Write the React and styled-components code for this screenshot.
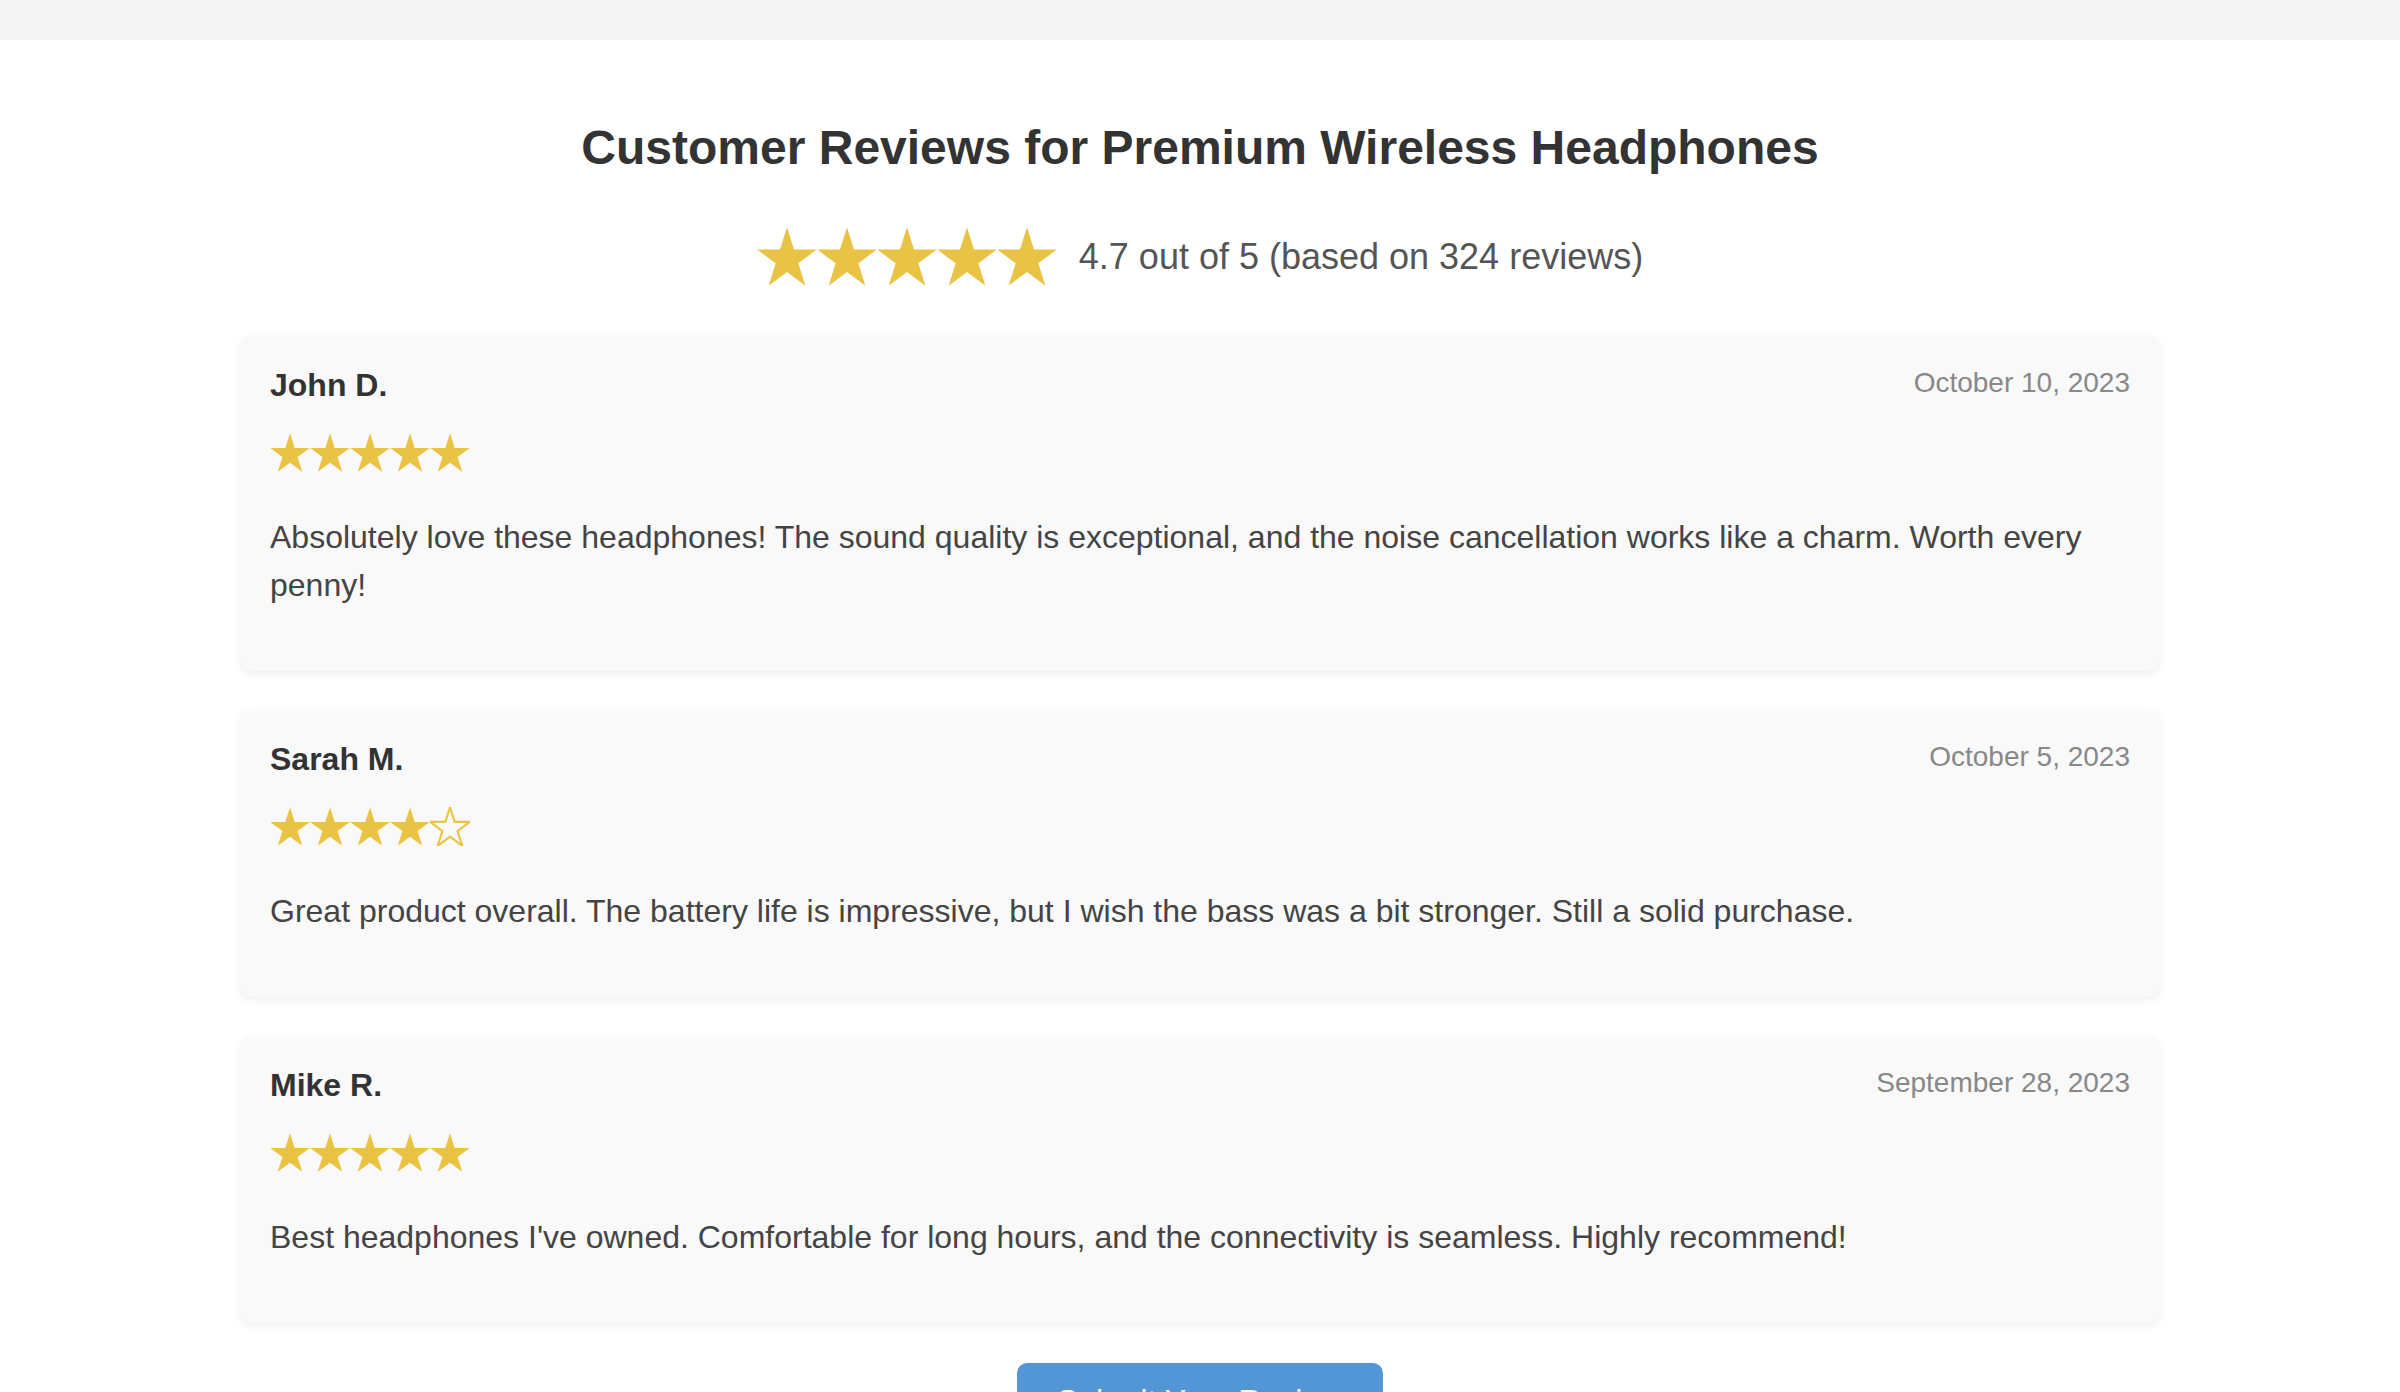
import React from "react";
import styled, { createGlobalStyle } from "styled-components";

const reviews = [
  {
    name: "John D.",
    date: "October 10, 2023",
    rating: 5,
    text: "Absolutely love these headphones! The sound quality is exceptional, and the noise cancellation works like a charm. Worth every penny!",
  },
  {
    name: "Sarah M.",
    date: "October 5, 2023",
    rating: 4,
    text: "Great product overall. The battery life is impressive, but I wish the bass was a bit stronger. Still a solid purchase.",
  },
  {
    name: "Mike R.",
    date: "September 28, 2023",
    rating: 5,
    text: "Best headphones I've owned. Comfortable for long hours, and the connectivity is seamless. Highly recommend!",
  },
];

const STAR_POINTS =
  "0,-50 11.23,-15.45 47.55,-15.45 18.16,5.9 29.39,40.45 0,19.1 -29.39,40.45 -18.16,5.9 -47.55,-15.45 -11.23,-15.45";

const Star = ({ filled, width, height }) => (
  <svg
    width={width}
    height={height}
    viewBox="-48 -50.5 96 91.5"
    preserveAspectRatio="none"
  >
    <polygon
      points={STAR_POINTS}
      fill={filled ? "#e9c444" : "none"}
      stroke="#e9c444"
      strokeWidth={filled ? 0 : 5}
      strokeLinejoin="miter"
    />
  </svg>
);

const Stars = ({ rating, big }) => (
  <StarRow big={big}>
    {[1, 2, 3, 4, 5].map((n) => (
      <Star
        key={n}
        filled={n <= rating}
        width={big ? 60 : 40}
        height={big ? 59 : 39}
      />
    ))}
  </StarRow>
);

const App = () => {
  return (
    <>
      <GlobalStyle />
      <TopBar />
      <Main>
        <Title>Customer Reviews for Premium Wireless Headphones</Title>
        <Summary>
          <Stars rating={5} big />
          <SummaryText>4.7 out of 5 (based on 324 reviews)</SummaryText>
        </Summary>
        <ReviewList>
          {reviews.map((r) => (
            <Card key={r.name}>
              <CardHeader>
                <Name>{r.name}</Name>
                <Date>{r.date}</Date>
              </CardHeader>
              <Stars rating={r.rating} />
              <ReviewText>{r.text}</ReviewText>
            </Card>
          ))}
        </ReviewList>
        <ButtonRow>
          <SubmitButton>Submit Your Review</SubmitButton>
        </ButtonRow>
      </Main>
    </>
  );
};

export default App;

const GlobalStyle = createGlobalStyle`
  body {
    margin: 0;
    background: #fff;
    font-family: "Liberation Sans", Arial, Helvetica, sans-serif;
    color: #333;
  }
`;

const TopBar = styled.div`
  height: 40px;
  background-color: #f4f4f4;
`;

const Main = styled.main`
  max-width: 1920px;
  margin: 0 auto;
  padding: 80px 0 60px;
`;

const Title = styled.h1`
  margin: 0;
  font-size: 48px;
  line-height: 55px;
  font-weight: 700;
  text-align: center;
  color: #333;
`;

const Summary = styled.div`
  margin-top: 51px;
  height: 60px;
  display: flex;
  justify-content: center;
  align-items: center;
  gap: 22px;
`;

const SummaryText = styled.span`
  font-size: 36px;
  line-height: 41px;
  color: #555;
`;

const StarRow = styled.div`
  display: flex;
  align-items: center;
  margin-top: ${(props) => (props.big ? "0" : "29px")};

  svg {
    display: block;
  }
`;

const ReviewList = styled.div`
  margin-top: 51px;
  display: flex;
  flex-direction: column;
  gap: 40px;
`;

const Card = styled.article`
  background-color: #f9f9f9;
  border-radius: 12px;
  padding: 30px;
  box-shadow: 0 2px 8px rgba(0, 0, 0, 0.08);
`;

const CardHeader = styled.div`
  display: flex;
  justify-content: space-between;
  align-items: flex-start;
`;

const Name = styled.span`
  font-size: 32px;
  line-height: 37px;
  font-weight: 700;
  color: #333;
`;

const Date = styled.span`
  font-size: 28px;
  line-height: 32px;
  color: #888;
`;

const ReviewText = styled.p`
  margin: 41px 0 32px;
  font-size: 32px;
  line-height: 48px;
  color: #444;
`;

const ButtonRow = styled.div`
  margin-top: 40px;
  display: flex;
  justify-content: center;
`;

const SubmitButton = styled.button`
  background-color: #5296d6;
  color: #fff;
  border: none;
  border-radius: 10px;
  padding: 20px 40px;
  font-family: inherit;
  font-size: 32px;
  cursor: pointer;

  &:hover {
    background-color: #3f82c4;
  }
`;
